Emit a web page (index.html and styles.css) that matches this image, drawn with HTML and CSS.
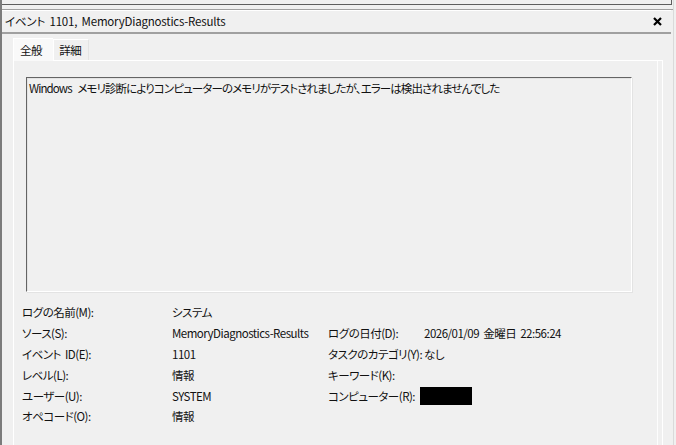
FILE: index.html
```html
<!doctype html>
<html lang="ja">
  <head>
    <meta charset="UTF-8" />
    <title>イベント 1101, MemoryDiagnostics-Results</title>
    <link rel="stylesheet" href="styles.css">
  </head>
  <body>
    <div class="window">
      <div class="top-pane"></div>
      <div class="splitter"></div>

      <div class="title-bar">
        <span class="title">イベント 1101, MemoryDiagnostics-Results</span>
        <svg class="close" width="9" height="9" viewBox="0 0 9 9">
          <path d="M1 1 L8 8 M8 1 L1 8" stroke="#000" stroke-width="2.2" />
        </svg>
      </div>

      <div class="tabs">
        <div class="tab tab-active">全般</div>
        <div class="tab">詳細</div>
      </div>

      <div class="panel">
        <div class="panel-inner">
          <div class="description">Windows メモリ診断によりコンピューターのメモリがテストされましたが、エラーは検出されませんでした</div>

          <div class="fields">
            <span>ログの名前(M):</span>
            <span>システム</span>
            <span></span>
            <span></span>

            <span>ソース(S):</span>
            <span>MemoryDiagnostics-Results</span>
            <span>ログの日付(D):</span>
            <span>2026/01/09 金曜日 22:56:24</span>

            <span>イベント ID(E):</span>
            <span>1101</span>
            <span>タスクのカテゴリ(Y):</span>
            <span>なし</span>

            <span>レベル(L):</span>
            <span>情報</span>
            <span>キーワード(K):</span>
            <span></span>

            <span>ユーザー(U):</span>
            <span>SYSTEM</span>
            <span>コンピューター(R):</span>
            <span><span class="redacted"></span></span>

            <span>オペコード(O):</span>
            <span>情報</span>
            <span></span>
            <span></span>
          </div>
        </div>
      </div>
    </div>
  </body>
</html>
```

FILE: styles.css
```css
html,
body {
  margin: 0;
  height: 100%;
  overflow: hidden;
}
body {
  background: #f0f0f0;
  color: #111;
  font-family: "Noto Sans CJK JP", "Liberation Sans", sans-serif;
  font-size: 11.5px;
  letter-spacing: -0.4px;
  word-spacing: 2px;
  font-feature-settings: "palt";
}
.window {
  width: 674px;
  height: 445px;
  border-left: 2px solid #7b7b7b;
  border-right: 1px solid #dadada;
  box-sizing: border-box;
}
.top-pane {
  height: 4px;
  margin-right: 1px;
  border-bottom: 1px solid #5e5e5e;
  border-right: 1px solid #5e5e5e;
}
.splitter {
  height: 4px;
  border-bottom: 1px solid #a0a0a0;
}
.title-bar {
  display: flex;
  align-items: center;
  justify-content: space-between;
  height: 21px;
  padding: 0 9px 0 3px;
  border-top: 1px solid #fff;
  border-bottom: 2px solid #a0a0a0;
  margin-right: 2px;
}
.title {
  line-height: 21px;
  letter-spacing: -0.2px;
}
.close {
  display: block;
}
.tabs {
  display: flex;
  align-items: flex-end;
  height: 26px;
  padding-left: 11px;
}
.tab {
  height: 20px;
  line-height: 20px;
  padding: 0 7px 0 5px;
  border: 1px solid #fff;
  border-bottom: none;
  border-right-color: #e3e3e3;
}
.tab-active {
  height: 22px;
  line-height: 22px;
  padding: 0 11px 0 6px;
  background: #f9f9f9;
  position: relative;
  top: 1px;
  border-right: none;
}
.panel {
  margin-left: 11px;
  width: 650px;
  height: 385px;
  border: 1px solid #fff;
  border-bottom: none;
  box-sizing: border-box;
}
.panel-inner {
  height: 100%;
  width: 644px;
  border-right: 1px solid #fdfdfd;
  box-sizing: border-box;
  overflow: hidden;
}
.description {
  margin: 16px 0 0 12px;
  width: 606px;
  height: 215px;
  padding: 2px 2px;
  line-height: 17px;
  letter-spacing: -0.9px;
  word-spacing: 4px;
  box-sizing: border-box;
  border: 1px solid;
  border-color: #646464 #fff #fff #646464;
  box-shadow: inset 1px 1px 0 #e3e3e3, 1px 1px 0 #e3e3e3;
}
.fields {
  display: grid;
  grid-template-columns: 150px 156px 96px auto;
  grid-auto-rows: 20.8px;
  align-items: center;
  margin: 10px 0 0 8px;
  line-height: 16px;
  letter-spacing: -0.5px;
  white-space: nowrap;
}
.redacted {
  display: block;
  width: 52px;
  height: 18px;
  margin-left: -4px;
  background: #000;
}
```
